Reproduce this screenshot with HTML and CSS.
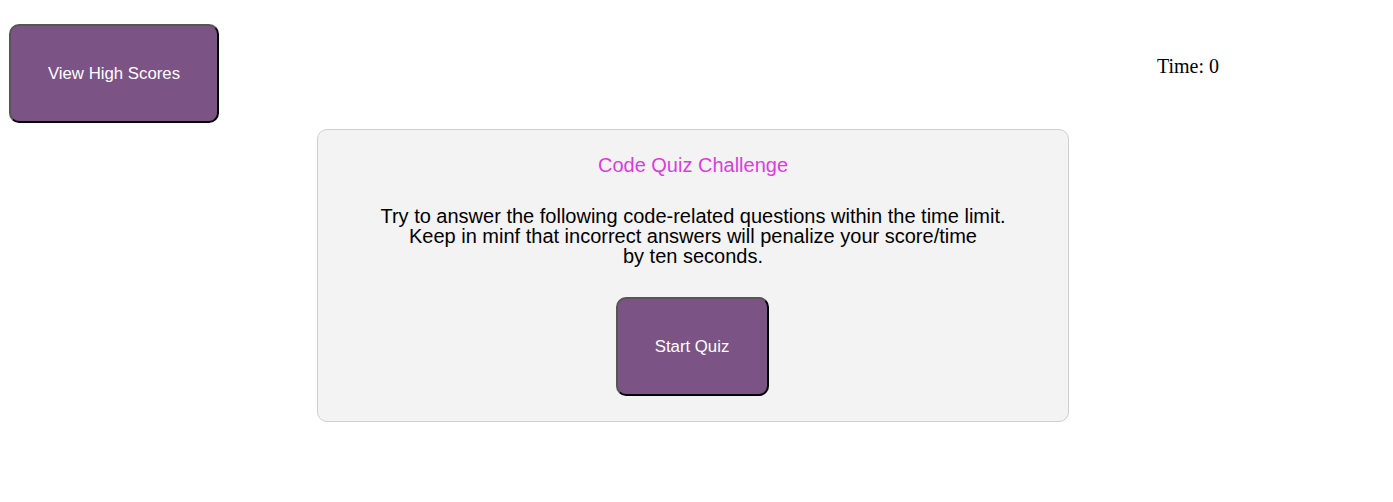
FILE: index.html
```html
<!DOCTYPE html>
<html>
<head>
<meta charset="utf-8">
<link rel="stylesheet" href="styles.css">
</head>
<body>
<header class="top">
  <button class="btn btn-scores">View High Scores</button>
  <div class="timer">Time: 0</div>
</header>
<main class="card">
  <h1 class="title">Code Quiz Challenge</h1>
  <p class="intro">Try to answer the following code-related questions within the time limit.<br>Keep in minf that incorrect answers will penalize your score/time<br>by ten seconds.</p>
  <button class="btn btn-start">Start Quiz</button>
</main>
</body>
</html>
```
FILE: styles.css
```css
body {
  margin: 8px;
  background: #fff;
  font-family: "Times New Roman", "Liberation Serif", serif;
}
.top {
  display: flex;
  justify-content: space-between;
  align-items: center;
  padding: 16px 166px 0 1px;
}
.timer {
  font-size: 20px;
  color: #000;
  margin-top: -14px;
}
.btn {
  background: #7b5384;
  color: #fff;
  font-family: Arial, "Liberation Sans", sans-serif;
  font-size: 16.8px;
  border: 2px outset #767676;
  border-color: #555 #000 #000 #555;
  border-radius: 10px;
  height: 99px;
  padding: 0;
}
.btn-scores {
  width: 210px;
}
.card {
  width: 752px;
  height: 293px;
  box-sizing: border-box;
  margin: 6px 0 0 309px;
  background: #f3f3f3;
  border: 1px solid #cfcfcf;
  border-radius: 10px;
  display: flex;
  flex-direction: column;
  align-items: center;
  font-family: Arial, "Liberation Sans", sans-serif;
}
.title {
  font-weight: normal;
  font-size: 20px;
  color: #dc3cdc;
  margin: 23px 0 0;
  line-height: 24px;
}
.intro {
  font-size: 20px;
  line-height: 20px;
  text-align: center;
  margin: 29px 0 0;
  color: #000;
}
.btn-start {
  width: 153px;
  margin: 31px 0 0 -2px;
}
```
